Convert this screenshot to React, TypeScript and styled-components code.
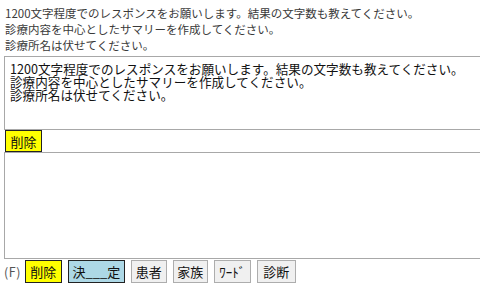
import React from "react";
import styled, { createGlobalStyle } from "styled-components";

const Global = createGlobalStyle`
  html, body { margin: 0; padding: 0; background: #fff; overflow: hidden; }
  body { font-family: "Noto Sans CJK JP", "Noto Sans", sans-serif; }
`;

const Page = styled.div`
  width: 480px;
  height: 286px;
  overflow: hidden;
  display: flex;
  flex-direction: column;
  padding: 5px 0 0 4px;
  box-sizing: border-box;
`;

const Instructions = styled.div`
  font-size: 11.5px;
  line-height: 16px;
  color: #3a3a3a;
  padding-left: 1px;
  white-space: nowrap;
`;

const Editor = styled.div`
  margin-top: 3px;
  width: 500px;
  display: flex;
  flex-direction: column;
`;

const TextBox = styled.div<{ $h: number }>`
  height: ${(p) => p.$h}px;
  box-sizing: border-box;
  border: 1px solid #a8a8a8;
  padding: 5px 0 0 5px;
  font-size: 12.6px;
  line-height: 13px;
  color: #111;
  white-space: pre;
`;

const ToolRow = styled.div`
  height: 22px;
  display: flex;
  align-items: stretch;
  padding-left: 1px;
`;

const Button = styled.button<{ $bg: string; $border: string; $w: number }>`
  width: ${(p) => p.$w}px;
  height: 100%;
  box-sizing: border-box;
  background: ${(p) => p.$bg};
  border: 1px solid ${(p) => p.$border};
  border-radius: 0;
  padding: 0;
  margin: 0;
  font-family: "Noto Sans CJK JP", sans-serif;
  font-size: 13px;
  line-height: 1;
  color: #111;
  display: flex;
  align-items: center;
  justify-content: center;
  white-space: pre;
`;

const Bottom = styled.div`
  margin-top: 1px;
  height: 23px;
  display: flex;
  align-items: stretch;
  gap: 6px;
`;

const FLabel = styled.span`
  font-size: 12.5px;
  color: #555;
  display: flex;
  align-items: center;
  margin-right: -2px;
  letter-spacing: 0.5px;
`;

export default function App() {
  return (
    <>
      <Global />
      <Page>
        <Instructions>
          <div>1200文字程度でのレスポンスをお願いします。結果の文字数も教えてください。</div>
          <div>診療内容を中心としたサマリーを作成してください。</div>
          <div>診療所名は伏せてください。</div>
        </Instructions>
        <Editor>
          <TextBox $h={74}>
            {"1200文字程度でのレスポンスをお願いします。結果の文字数も教えてください。\n診療内容を中心としたサマリーを作成してください。\n診療所名は伏せてください。"}
          </TextBox>
          <ToolRow>
            <Button $bg="#ffff00" $border="#222" $w={37}>削除</Button>
          </ToolRow>
          <TextBox $h={107} />
        </Editor>
        <Bottom>
          <FLabel>(F)</FLabel>
          <Button $bg="#ffff00" $border="#222" $w={37}>削除</Button>
          <Button $bg="#add8e6" $border="#222" $w={57}>{"決___定"}</Button>
          <Button $bg="#f0f0f0" $border="#adadad" $w={36}>患者</Button>
          <Button $bg="#f0f0f0" $border="#adadad" $w={35}>家族</Button>
          <Button $bg="#f0f0f0" $border="#adadad" $w={37}>ﾜｰﾄﾞ</Button>
          <Button $bg="#f0f0f0" $border="#adadad" $w={39}>診断</Button>
        </Bottom>
      </Page>
    </>
  );
}
